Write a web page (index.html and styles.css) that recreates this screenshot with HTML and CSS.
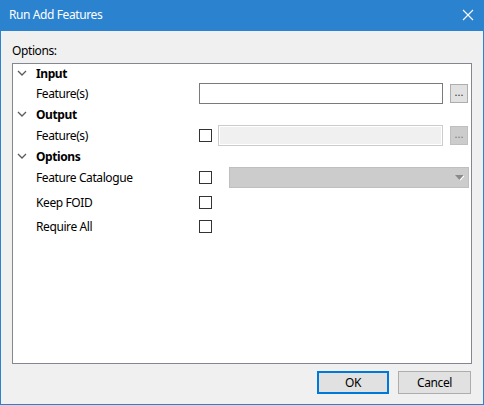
FILE: index.html
```html
<!DOCTYPE html>
<html>
<head>
<meta charset="utf-8">
<link rel="stylesheet" href="styles.css">
</head>
<body>
<div class="window">
  <div class="titlebar">
    <span class="title">Run Add Features</span>
    <svg class="close" width="12" height="12" viewBox="0 0 12 12"><path d="M1 1 L11 11 M11 1 L1 11" stroke="#fff" stroke-width="1.1" fill="none"/></svg>
  </div>
  <div class="content">
    <div class="opts-label">Options:</div>
    <div class="panel">
      <div class="row head first">
        <svg class="chev" width="10" height="6" viewBox="0 0 10 6"><path d="M1 1 L5 5 L9 1" stroke="#5a5a5a" stroke-width="1.3" fill="none"/></svg>
        <span class="htext">Input</span>
      </div>
      <div class="row">
        <span class="label">Feature(s)</span>
        <div class="textbox wide"></div>
        <div class="browse">...</div>
      </div>
      <div class="row head">
        <svg class="chev" width="10" height="6" viewBox="0 0 10 6"><path d="M1 1 L5 5 L9 1" stroke="#5a5a5a" stroke-width="1.3" fill="none"/></svg>
        <span class="htext">Output</span>
      </div>
      <div class="row">
        <span class="label">Feature(s)</span>
        <div class="check"></div>
        <div class="textbox disabled"></div>
        <div class="browse off">...</div>
      </div>
      <div class="row head">
        <svg class="chev" width="10" height="6" viewBox="0 0 10 6"><path d="M1 1 L5 5 L9 1" stroke="#5a5a5a" stroke-width="1.3" fill="none"/></svg>
        <span class="htext">Options</span>
      </div>
      <div class="row">
        <span class="label">Feature Catalogue</span>
        <div class="check"></div>
        <div class="combo">
          <svg class="arrow" width="9" height="6" viewBox="0 0 9 6"><path d="M0 0 H9 L4.5 5 Z" fill="#8a8a8a"/><path d="M9 0 L9 1.5 L5.5 5.5 L4.5 5 Z" fill="#fff"/></svg>
        </div>
      </div>
      <div class="row tall gap">
        <span class="label">Keep FOID</span>
        <div class="check"></div>
      </div>
      <div class="row tall">
        <span class="label">Require All</span>
        <div class="check"></div>
      </div>
    </div>
    <div class="buttons">
      <div class="btn ok">OK</div>
      <div class="btn">Cancel</div>
    </div>
  </div>
</div>
</body>
</html>
```
FILE: styles.css
```css
* { box-sizing: border-box; }
html, body { margin: 0; padding: 0; }
body {
  font-family: "Noto Sans", "Liberation Sans", sans-serif;
  font-size: 12px;
  letter-spacing: -0.4px;
  color: #000;
  background: #fff;
}
.window {
  width: 484px;
  height: 405px;
  border: 1px solid #2b83cf;
  border-top: none;
  background: #f0f0f0;
  display: flex;
  flex-direction: column;
}
.titlebar {
  height: 31px;
  margin: 0 -1px;
  background: #2b83cf;
  display: flex;
  align-items: center;
  justify-content: space-between;
  padding: 0 10px 0 9px;
}
.title {
  color: #fff;
  font-size: 12px;
  line-height: 16px;
  margin-top: -1px;
}
.close { display: block; margin-top: -1px; }
.content {
  flex: 1;
  padding: 10px 11px 0 11px;
  display: flex;
  flex-direction: column;
}
.opts-label {
  height: 22px;
  line-height: 16px;
  padding-top: 2px;
}
.panel {
  width: 460px;
  height: 301px;
  background: #fff;
  border: 1px solid #828790;
  display: flex;
  flex-direction: column;
}
.row {
  height: 21px;
  display: flex;
  align-items: center;
  padding-left: 23px;
  flex-shrink: 0;
}
.row.first { height: 19px; }
.row.tall { height: 24px; }
.row.gap { margin-top: 2px; }
.row.head { padding-left: 4px; }
.chev { display: block; margin-right: 9px; margin-top: -1px; }
.htext { font-weight: bold; }
.label { width: 163px; flex-shrink: 0; }
.textbox {
  height: 21px;
  background: #fff;
  border: 1px solid #7a7a7a;
}
.textbox.wide { width: 244px; }
.textbox.disabled {
  width: 225px;
  margin-left: 6px;
  border: 1px solid #cccccc;
  box-shadow: inset 0 0 0 1px #fff;
  background: #f0f0f0;
}
.browse {
  width: 18px;
  height: 19px;
  margin-left: 7px;
  background: #e1e1e1;
  border: 1px solid #adadad;
  font-size: 11px;
  letter-spacing: 0;
  line-height: 14px;
  text-align: center;
  color: #333;
}
.browse.off {
  background: #cccccc;
  border-color: #bfbfbf;
  color: #7a7a7a;
}
.check {
  width: 13px;
  height: 13px;
  border: 1px solid #333;
  background: #fff;
  flex-shrink: 0;
}
.combo {
  width: 240px;
  height: 21px;
  margin-left: 17px;
  background: #cccccc;
  border: 1px solid #bfbfbf;
  display: flex;
  align-items: center;
  justify-content: flex-end;
  padding-right: 4px;
}
.arrow { display: block; }
.buttons {
  display: flex;
  justify-content: flex-end;
  gap: 9px;
  margin-top: 7px;
  padding-right: 1px;
}
.btn {
  width: 73px;
  height: 23px;
  background: #e1e1e1;
  border: 1px solid #adadad;
  text-align: center;
  line-height: 21px;
}
.btn.ok {
  width: 72px;
  border: 2px solid #0078d7;
  line-height: 19px;
}
```
